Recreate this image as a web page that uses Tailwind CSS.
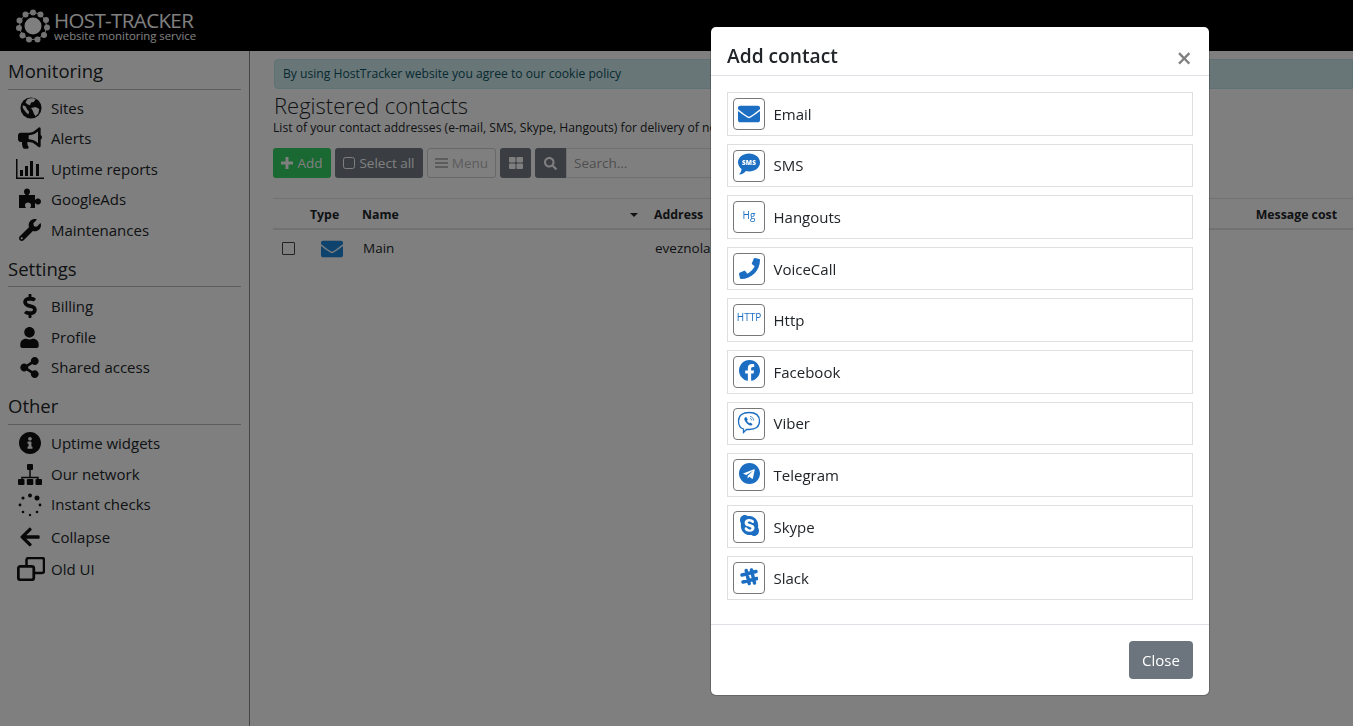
<!DOCTYPE html>
<html lang="en">
<head>
<meta charset="utf-8">
<title>Registered contacts</title>
<script src="https://cdn.jsdelivr.net/npm/@tailwindcss/browser@4"></script>
</head>
<body class="m-0 h-[726px] w-[1353px] overflow-hidden bg-white font-['Open_Sans',sans-serif] text-[#212529]">
<header class="flex h-[51px] items-center bg-black pl-4 text-white">
  <svg class="h-[34px] w-[34px]" viewBox="0 0 34 34" fill="#e8e8e8">
    <circle cx="17" cy="17" r="13.500" fill="none" stroke="#e8e8e8" stroke-width="1"/>
    <circle cx="17" cy="17" r="8.500" fill="#fff"/>
    <circle cx="17" cy="3.500" r="3"/><circle cx="24.500" cy="5.500" r="3"/><circle cx="30" cy="11" r="3"/><circle cx="31" cy="18.500" r="3"/><circle cx="28" cy="26" r="3"/><circle cx="21.500" cy="30.500" r="3"/><circle cx="13" cy="30.500" r="3"/><circle cx="6.500" cy="26.500" r="3"/><circle cx="3" cy="19" r="3"/><circle cx="3.500" cy="11.500" r="3"/><circle cx="9.500" cy="5.500" r="3"/>
  </svg>
  <div class="ml-1 flex flex-col">
    <span class="text-[20.5px] leading-[20px] tracking-[-0.62px]">HOST-TRACKER</span>
    <span class="text-[11.35px] leading-[11px]">website monitoring service</span>
  </div>
</header>
<div class="flex h-[675px]">
  <aside class="h-full w-[250px] shrink-0 border-r border-[#888] px-2 text-[15px]">
    <h2 class="flex h-[39px] items-center border-b border-[#bbb] pt-[2px] text-[18.5px] font-normal">Monitoring</h2>
    <ul class="mt-[2.6px] flex flex-col">
      <li class="flex h-[30.5px] items-center"><span class="flex w-[43px] justify-center pl-[2px]"><svg class="h-[22px] w-[22px]" viewBox="0 0 24 24"><circle cx="12" cy="12" r="11.500" fill="#111"/><path d="M8 2.500c3-1.500 7-1.500 9 0l-2 3-3 .5-1 3-3-1-2-2zM12 12l5-1 4 2-1 5-3 3-2-3-1-3zM3 9l3 1 2 4 2 2-1 3-3-3-3-4z" fill="#fff"/></svg></span>Sites</li>
      <li class="flex h-[30.5px] items-center"><span class="flex w-[43px] justify-center"><svg class="h-[24px] w-[24px]" viewBox="0 0 576 512" fill="#111"><path d="M576 240c0-23.63-12.95-44.04-32-55.12V32.01C544 23.26 537.02 0 512 0c-7.12 0-14.19 2.38-19.98 7.02l-85.03 68.03C364.28 109.19 310.66 128 256 128H64c-35.35 0-64 28.65-64 64v96c0 35.35 28.65 64 64 64h33.7c-1.39 10.48-2.18 21.14-2.18 32 0 39.77 9.26 77.35 25.56 110.94 5.19 10.69 16.52 17.06 28.4 17.06h74.28c26.05 0 41.69-29.84 25.9-50.56-16.4-21.52-26.15-48.36-26.15-77.44 0-11.11 1.62-21.79 4.41-32H256c54.66 0 108.28 18.81 150.98 52.95l85.03 68.03a32.023 32.023 0 0 0 19.98 7.02c24.92 0 32-22.78 32-32V295.13C563.05 284.04 576 263.63 576 240zm-96 141.42l-33.05-26.44C392.95 311.78 325.12 288 256 288v-96c69.12 0 136.95-23.78 190.95-66.98L480 98.58v282.84z"/></svg></span>Alerts</li>
      <li class="flex h-[30.5px] items-center"><span class="flex w-[43px] justify-center"><svg class="h-[20px] w-[28px]" viewBox="0 0 28 20" fill="#111"><path d="M0 0h1.500v18.500H28V20H0z"/><rect x="4" y="11" width="3" height="6"/><rect x="9" y="7" width="3" height="10"/><rect x="14" y="2" width="3" height="15"/><rect x="20" y="5" width="3" height="12"/></svg></span>Uptime reports</li>
      <li class="flex h-[30.5px] items-center"><span class="flex w-[43px] justify-center"><svg class="h-[22px] w-[24px]" viewBox="0 0 24 22" fill="#111"><path d="M1 7h6.500C7 6 6 5.500 6 3.500 6 1.500 7.500.5 9 .5s3 1 3 3C12 5.500 11 6 10.500 7H17v5c1-.8 1.500-1.500 3-1.500 2 0 3 1.500 3 3s-1 3-3 3c-1.500 0-2-.7-3-1.500v5h-5c.8-1 1-1.500 1-3 0-1.500-1.500-2.500-3-2.500s-3 1-3 2.500c0 1.500.5 2 1 3H1z"/></svg></span>GoogleAds</li>
      <li class="flex h-[30.5px] items-center"><span class="flex w-[43px] justify-center"><svg class="h-[22px] w-[22px]" viewBox="0 0 512 512" fill="#111"><path d="M507.73 109.1c-2.24-9.03-13.54-12.09-20.12-5.51l-74.36 74.36-67.88-11.31-11.31-67.88 74.36-74.36c6.62-6.62 3.43-17.9-5.66-20.16-47.38-11.74-99.55.91-136.58 37.93-39.64 39.64-50.55 97.1-34.05 147.2L18.74 402.76c-24.99 24.99-24.99 65.51 0 90.5 24.99 24.99 65.51 24.99 90.5 0l213.21-213.21c50.12 16.71 107.47 5.68 147.37-34.22 37.07-37.07 49.7-89.32 37.91-136.73zM64 472c-13.25 0-24-10.75-24-24 0-13.26 10.75-24 24-24s24 10.74 24 24c0 13.25-10.75 24-24 24z"/></svg></span>Maintenances</li>
    </ul>
    <h2 class="mt-[4.4px] flex h-[38px] items-center border-b border-[#bbb] pt-[2px] text-[18.5px] font-normal">Settings</h2>
    <ul class="mt-[3.4px] flex flex-col">
      <li class="flex h-[30.5px] items-center"><span class="flex w-[43px] justify-center"><svg class="h-[24px] w-[14px]" viewBox="0 0 288 512" fill="#111"><path d="M209.2 233.4l-108-31.6C88.7 198.2 80 186.5 80 173.5c0-16.3 13.2-29.5 29.5-29.5h66.3c12.2 0 24.2 3.7 34.2 10.5 6.1 4.1 14.3 3.1 19.5-2l34.8-34c7.1-6.9 6.1-18.4-1.8-24.5C238 74.8 207.4 64.1 176 64V16c0-8.8-7.2-16-16-16h-32c-8.8 0-16 7.2-16 16v48h-2.5C45.8 64-5.4 118.7.5 183.6c4.2 46.1 39.4 83.6 83.8 96.6l102.5 30c12.5 3.7 21.2 15.3 21.2 28.3 0 16.3-13.2 29.5-29.5 29.5h-66.3C100 368 88 364.3 78 357.5c-6.1-4.1-14.3-3.1-19.5 2l-34.8 34c-7.1 6.9-6.1 18.4 1.8 24.5 24.5 19.2 55.1 29.9 86.5 30v48c0 8.8 7.2 16 16 16h32c8.8 0 16-7.2 16-16v-48.2c46.6-.9 90.3-28.6 105.7-72.7 21.5-61.6-14.6-124.8-72.5-141.7z"/></svg></span>Billing</li>
      <li class="flex h-[30.5px] items-center pt-[1px]"><span class="flex w-[43px] justify-center"><svg class="h-[21px] w-[19px]" viewBox="0 0 448 512" fill="#111"><path d="M224 256c70.7 0 128-57.3 128-128S294.7 0 224 0 96 57.3 96 128s57.3 128 128 128zm89.6 32h-16.7c-22.2 10.2-46.9 16-72.9 16s-50.6-5.8-72.9-16h-16.7C60.2 288 0 348.2 0 422.4V464c0 26.5 21.5 48 48 48h352c26.5 0 48-21.5 48-48v-41.6c0-74.2-60.2-134.4-134.4-134.4z"/></svg></span>Profile</li>
      <li class="flex h-[30.5px] items-center"><span class="flex w-[43px] justify-center"><svg class="h-[21px] w-[19px]" viewBox="0 0 448 512" fill="#111"><path d="M352 320c-22.608 0-43.387 7.819-59.79 20.895l-102.486-64.054a96.551 96.551 0 0 0 0-41.683l102.486-64.054C308.613 184.181 329.392 192 352 192c53.019 0 96-42.981 96-96S405.019 0 352 0s-96 42.981-96 96c0 7.158.79 14.13 2.276 20.841L155.79 180.895C139.387 167.819 118.608 160 96 160c-53.019 0-96 42.981-96 96s42.981 96 96 96c22.608 0 43.387-7.819 59.79-20.895l102.486 64.054A96.301 96.301 0 0 0 256 416c0 53.019 42.981 96 96 96s96-42.981 96-96-42.981-96-96-96z"/></svg></span>Shared access</li>
    </ul>
    <h2 class="mt-[4.4px] flex h-[38px] items-center border-b border-[#bbb] pt-[2px] text-[18.5px] font-normal">Other</h2>
    <ul class="mt-[3px] flex flex-col">
      <li class="flex h-[30.5px] items-center"><span class="flex w-[43px] justify-center"><svg class="h-[22px] w-[22px]" viewBox="8 8 496 496" fill="#111"><path d="M256 8C119.043 8 8 119.083 8 256c0 136.997 111.043 248 248 248s248-111.003 248-248C504 119.083 392.957 8 256 8zm0 110c23.196 0 42 18.804 42 42s-18.804 42-42 42-42-18.804-42-42 18.804-42 42-42zm56 254c0 6.627-5.373 12-12 12h-88c-6.627 0-12-5.373-12-12v-24c0-6.627 5.373-12 12-12h12v-64h-12c-6.627 0-12-5.373-12-12v-24c0-6.627 5.373-12 12-12h64c6.627 0 12 5.373 12 12v100h12c6.627 0 12 5.373 12 12v24z"/></svg></span>Uptime widgets</li>
      <li class="flex h-[30.5px] items-center pt-[1px]"><span class="flex w-[43px] justify-center"><svg class="h-[21px] w-[24px]" viewBox="0 0 24 21"><path d="M12 6v7M4 17v-3.500h16V17" fill="none" stroke="#111" stroke-width="1.500"/><g fill="#111"><rect x="9" y="0" width="6" height="6" rx="1"/><rect x="0" y="15" width="6.500" height="6" rx="1"/><rect x="8.800" y="15" width="6.500" height="6" rx="1"/><rect x="17.500" y="15" width="6.500" height="6" rx="1"/></g></svg></span>Our network</li>
      <li class="flex h-[30.5px] items-center pt-[1px]"><span class="flex w-[43px] justify-center"><svg class="h-[24px] w-[24px]" viewBox="0 0 24 24" fill="#111"><circle cx="12" cy="2.500" r="2"/><circle cx="19" cy="5" r="2.500"/><circle cx="22" cy="12" r="1.400"/><circle cx="19" cy="19" r="1.300"/><circle cx="12" cy="22" r="1.200"/><circle cx="5" cy="19" r="1.300"/><circle cx="2" cy="12" r="1.400"/><circle cx="5" cy="5" r="1.600"/></svg></span>Instant checks</li>
      <li class="flex h-[33px] items-center pt-[3px]"><span class="flex w-[43px] justify-center"><svg class="h-[22px] w-[20px]" viewBox="0 0 448 512" fill="#111"><path d="M257.5 445.1l-22.2 22.2c-9.4 9.4-24.6 9.4-33.9 0L7 273c-9.4-9.4-9.4-24.6 0-33.9L201.4 44.7c9.4-9.4 24.6-9.4 33.9 0l22.2 22.2c9.5 9.5 9.3 25-.4 34.3L136.6 216H424c13.300 0 24 10.700 24 24v32c0 13.300-10.700 24-24 24H136.6l120.5 114.8c9.8 9.3 10 24.8.4 34.300z"/></svg></span>Collapse</li>
      <li class="flex h-[32px] items-center pt-[2px]"><span class="flex w-[43px] justify-center pl-[2px]"><svg class="h-[24px] w-[28px]" viewBox="0 0 28 24" fill="none" stroke="#111" stroke-width="2.500"><rect x="1.300" y="9.300" width="15.500" height="13.500" rx="2" stroke-width="2.800"/><path d="M9.500 9V3a2 2 0 0 1 2-2h13.500a2 2 0 0 1 2 2v11a2 2 0 0 1-2 2h-8"/></svg></span>Old UI</li>
    </ul>
  </aside>
  <main class="min-w-0 flex-1 pl-[23px]">
    <div class="ml-px mt-2 flex h-[30px] items-center rounded-l-[4px] border border-[#bee5eb] bg-[#d1ecf1] pl-2 text-[12.13px] text-[#0c5460]">By using HostTracker website you agree to our cookie policy</div>
    <h1 class="ml-px mt-[1px] text-[22px] font-light leading-[31px] text-[#212529]">Registered contacts</h1>
    <p class="text-[12.13px] leading-[14px]">List of your contact addresses (e-mail, SMS, Skype, Hangouts) for delivery of notifications</p>
    <div class="mt-[13px] flex gap-[4px] text-[13.5px]">
      <button class="flex h-[30px] w-[58px] items-center justify-center gap-1 rounded-[3px] bg-[#35d065] text-white"><svg class="h-[12px] w-[12px]" viewBox="0 0 12 12" fill="white"><path d="M4.500 0h3v4.500H12v3H7.500V12h-3V7.500H0v-3h4.500z"/></svg>Add</button>
      <button class="flex h-[30px] w-[88px] items-center justify-center gap-1 rounded-[3px] bg-[#747d86] text-white"><svg class="h-[12px] w-[12px]" viewBox="0 0 12 12" fill="none" stroke="white"><rect x=".5" y=".5" width="11" height="11" rx="2"/></svg>Select all</button>
      <button class="flex h-[30px] w-[69px] items-center justify-center gap-1 rounded-[3px] border border-[#d0d0d0] text-[#b8b8b8]"><svg class="h-[12px] w-[13px]" viewBox="0 0 13 12" fill="#b8b8b8"><rect y="1" width="13" height="2"/><rect y="5" width="13" height="2"/><rect y="9" width="13" height="2"/></svg>Menu</button>
      <button class="flex h-[30px] w-[31px] items-center justify-center rounded-[3px] bg-[#747d86]"><svg class="h-[12px] w-[14px]" viewBox="0 0 14 12" fill="white"><rect width="6.500" height="5.500" rx="1"/><rect x="7.500" width="6.500" height="5.500" rx="1"/><rect y="6.500" width="6.500" height="5.500" rx="1"/><rect x="7.500" y="6.500" width="6.500" height="5.500" rx="1"/></svg></button>
      <div class="flex h-[30px] w-[300px]">
        <span class="flex w-[31px] items-center justify-center rounded-l-[3px] bg-[#747d86]"><svg class="h-[13px] w-[13px]" viewBox="0 0 512 512" fill="white"><path d="M505 442.7L405.3 343c-4.5-4.5-10.6-7-17-7H372c27.6-35.3 44-79.7 44-128C416 93.1 322.9 0 208 0S0 93.1 0 208s93.1 208 208 208c48.3 0 92.7-16.4 128-44v16.3c0 6.4 2.5 12.5 7 17l99.7 99.7c9.4 9.4 24.6 9.4 33.9 0l28.3-28.3c9.4-9.4 9.4-24.6.1-34zM208 336c-70.7 0-128-57.2-128-128 0-70.7 57.2-128 128-128 70.7 0 128 57.2 128 128 0 70.7-57.2 128-128 128z"/></svg></span>
        <span class="flex flex-1 items-center border border-[#e0e0e0] pl-[7px] text-[#a0a0a0]">Search...</span>
      </div>
    </div>
    <div class="mt-5 flex h-[32px] items-center border-y border-[#dee2e6] border-b-2 pr-4 pt-[3px] text-[12.3px] font-bold">
      <span class="ml-[37px] w-[52px]">Type</span><span class="w-[286px]">Name</span>
      <svg class="mr-[16px] -ml-[18px] h-[4px] w-[8px]" viewBox="0 0 8 4" fill="#212529"><path d="M0 0h8L4 4z"/></svg>
      <span>Address</span><span class="ml-auto">Message cost</span>
    </div>
    <div class="flex h-[37px] items-center text-[13.5px]">
      <span class="ml-[9px] h-[13px] w-[13px] rounded-[1px] border border-[#444]"></span>
      <svg class="ml-[26px] h-[22px] w-[22px]" viewBox="0 0 512 512" fill="#1c86dc"><path d="M502.3 190.8c3.9-3.1 9.7-.2 9.7 4.7V400c0 26.5-21.5 48-48 48H48c-26.5 0-48-21.5-48-48V195.600c0-5 5.700-7.800 9.700-4.700 22.400 17.400 52.100 39.500 154.100 113.600 21.100 15.400 56.700 47.800 92.200 47.600 35.700.3 72-32.800 92.300-47.600 102-74.100 131.600-96.300 154-113.700zM256 320c23.200.4 56.600-29.200 73.400-41.400 132.700-96.300 142.800-104.700 173.400-128.700 5.800-4.500 9.200-11.500 9.200-18.900v-19c0-26.500-21.500-48-48-48H48C21.500 64 0 85.500 0 112v19c0 7.400 3.400 14.300 9.200 18.900 30.600 23.900 40.700 32.400 173.400 128.700 16.800 12.200 50.200 41.800 73.400 41.400z"/></svg>
      <span class="ml-5 w-[292px]">Main</span><span>eveznolan@example.com</span>
    </div>
  </main>
</div>
<div class="fixed inset-0 bg-black/50"></div>
<div class="fixed left-[711px] top-[27px] flex h-[668px] w-[498px] flex-col rounded-[5px] bg-white shadow-[0_0_0_1px_rgba(0,0,0,0.2)]">
  <div class="flex h-[49px] items-center justify-between border-b border-[#dee2e6] pl-4 pr-4 pt-[10px]">
    <h3 class="text-[19.2px] font-semibold">Add contact</h3>
    <span class="mr-[1px] mt-[3px] text-[27px] font-semibold leading-none text-[#808080]">×</span>
  </div>
  <ul class="flex flex-col gap-2 px-4 pt-4 text-[15px]">
    <li class="flex h-[43.6px] items-center gap-[8.5px] border border-[#dfdfdf] px-[5px] pt-[0.5px]"><span class="flex h-[32px] w-[32px] shrink-0 items-center justify-center rounded-[4px] border border-[#777]"><svg class="h-[22px] w-[22px]" viewBox="0 0 512 512" fill="#1b6ec2"><path d="M502.3 190.8c3.9-3.1 9.7-.2 9.7 4.7V400c0 26.5-21.5 48-48 48H48c-26.5 0-48-21.500-48-48V195.600c0-5 5.700-7.800 9.700-4.700 22.400 17.400 52.100 39.500 154.100 113.600 21.100 15.400 56.700 47.800 92.200 47.600 35.700.3 72-32.800 92.300-47.600 102-74.100 131.600-96.300 154-113.700zM256 320c23.200.4 56.600-29.200 73.400-41.400 132.700-96.300 142.800-104.700 173.400-128.700 5.800-4.500 9.200-11.500 9.200-18.900v-19c0-26.500-21.500-48-48-48H48C21.500 64 0 85.500 0 112v19c0 7.400 3.400 14.300 9.200 18.900 30.600 23.900 40.700 32.400 173.400 128.700 16.800 12.200 50.200 41.800 73.400 41.400z"/></svg></span>Email</li>
    <li class="flex h-[43.6px] items-center gap-[8.5px] border border-[#dfdfdf] px-[5px] pt-[0.5px]"><span class="flex h-[32px] w-[32px] shrink-0 items-center justify-center rounded-[4px] border border-[#777]"><svg class="mb-[3px] h-[24px] w-[24px]" viewBox="0 0 24 24"><path d="M12 1.500c6 0 11 3.800 11 9s-5 9-11 9c-1 0-2-.1-3-.4C7.500 21 5 22.500 2 22.500c1.500-1.500 2.500-3.500 2.500-5.500C2.500 15.400 1 13 1 10.500c0-5.200 5-9 11-9z" fill="#1b6ec2"/><text x="12" y="13" text-anchor="middle" font-size="6.500" font-weight="800" fill="#fff" font-family="'Open Sans',sans-serif">SMS</text></svg></span>SMS</li>
    <li class="flex h-[43.6px] items-center gap-[8.5px] border border-[#dfdfdf] px-[5px] pt-[0.5px]"><span class="flex h-[32px] w-[32px] shrink-0 justify-center rounded-[4px] border border-[#777] pt-[6px] text-[10px] leading-[14px] text-[#1b6ec2]">Hg</span>Hangouts</li>
    <li class="flex h-[43.6px] items-center gap-[8.5px] border border-[#dfdfdf] px-[5px] pt-[0.5px]"><span class="flex h-[32px] w-[32px] shrink-0 items-center justify-center rounded-[4px] border border-[#777]"><svg class="h-[21px] w-[21px]" viewBox="0 0 512 512" fill="#1b6ec2"><path d="M493.4 24.6l-104-24c-11.3-2.6-22.9 3.3-27.5 13.9l-48 112c-4.2 9.8-1.4 21.3 6.9 28l60.6 49.6c-36 76.7-98.9 140.5-177.2 177.2l-49.6-60.6c-6.8-8.3-18.2-11.1-28-6.9l-112 48C3.9 366.5-2 378.1.6 389.4l24 104C27.100 504.200 36.700 512 48 512c256.100 0 464-207.500 464-464 0-11.200-7.700-20.900-18.600-23.400z"/></svg></span>VoiceCall</li>
    <li class="flex h-[43.6px] items-center gap-[8.5px] border border-[#dfdfdf] px-[5px] pt-[0.5px]"><span class="flex h-[32px] w-[32px] shrink-0 justify-center rounded-[4px] border border-[#777] pt-[5px] text-[10px] leading-[14px] text-[#1b6ec2]">HTTP</span>Http</li>
    <li class="flex h-[43.6px] items-center gap-[8.5px] border border-[#dfdfdf] px-[5px] pt-[0.5px]"><span class="flex h-[32px] w-[32px] shrink-0 items-center justify-center rounded-[4px] border border-[#777]"><svg class="mb-[3px] h-[21px] w-[21px]" viewBox="8 8 496 496" fill="#1b6ec2"><path d="M504 256C504 119 393 8 256 8S8 119 8 256c0 123.780 90.690 226.380 209.250 245V327.690h-63V256h63v-54.640c0-62.150 37-96.480 93.670-96.480 27.140 0 55.520 4.840 55.520 4.840v61h-31.280c-30.800 0-40.410 19.120-40.410 38.730V256h68.780l-11 71.690h-57.780V501C413.310 482.380 504 379.780 504 256z"/></svg></span>Facebook</li>
    <li class="flex h-[43.6px] items-center gap-[8.5px] border border-[#dfdfdf] px-[5px] pt-[0.5px]"><span class="flex h-[32px] w-[32px] shrink-0 items-center justify-center rounded-[4px] border border-[#777]"><svg class="mb-[2px] h-[24px] w-[24px]" viewBox="0 0 24 24" fill="none" stroke="#1b6ec2"><path d="M12 1.500c6 0 10.500 2.500 10.500 8.500s-4 8.500-10.500 8.500h-2.500l-3 3v-3.500C3 17 1.500 14 1.500 10c0-6 4.500-8.500 10.500-8.500z" stroke-width="1.300"/><path d="M8 6.500c-1 .8-1 2 0 3.500 1 2 2.500 3.300 4.500 4.200 1.500.6 2.500 0 3-1l-2-1.700-1 .8c-1-.5-2-1.500-2.500-2.800l.8-1-1.500-2.500z" fill="#1b6ec2" stroke="none"/><path d="M13 5.500c2 .2 3.500 1.700 3.700 4M13 7.500c1 .1 1.700.9 1.800 2" stroke-width=".8"/></svg></span>Viber</li>
    <li class="flex h-[43.6px] items-center gap-[8.5px] border border-[#dfdfdf] px-[5px] pt-[0.5px]"><span class="flex h-[32px] w-[32px] shrink-0 items-center justify-center rounded-[4px] border border-[#777]"><svg class="mb-[3px] h-[21px] w-[21px]" viewBox="0 8 496 496" fill="#1b6ec2"><path d="M248 8C111 8 0 119 0 256s111 248 248 248 248-111 248-248S385 8 248 8zm121.800 169.900l-40.700 191.800c-3 13.600-11.100 16.900-22.400 10.500l-62-45.700-29.900 28.800c-3.300 3.300-6.100 6.100-12.500 6.100l4.400-63.100 114.900-103.800c5-4.400-1.100-6.900-7.700-2.500l-142 89.400-61.200-19.100c-13.300-4.200-13.600-13.300 2.800-19.700l239.100-92.200c11.100-4 20.800 2.700 17.200 19.500z"/></svg></span>Telegram</li>
    <li class="flex h-[43.6px] items-center gap-[8.5px] border border-[#dfdfdf] px-[5px] pt-[0.5px]"><span class="flex h-[32px] w-[32px] shrink-0 items-center justify-center rounded-[4px] border border-[#777]"><svg class="mb-[3px] h-[21px] w-[19px]" viewBox="0 32 448 448" preserveAspectRatio="none" fill="#1b6ec2"><path d="M424.700 299.800c2.900-14 4.700-28.900 4.700-43.800 0-113.500-91.900-205.300-205.300-205.300-14.900 0-29.700 1.700-43.800 4.700C161.300 40.700 137.700 32 112 32 50.200 32 0 82.200 0 144c0 25.700 8.700 49.300 23.300 68.200-2.900 14-4.700 28.900-4.700 43.800 0 113.500 91.900 205.300 205.300 205.300 14.900 0 29.700-1.700 43.800-4.700 19 14.600 42.600 23.300 68.200 23.300 61.800 0 112-50.200 112-112 .1-25.600-8.600-49.200-23.200-68.100zm-194.600 91.500c-65.600 0-120.500-29.200-120.500-65 0-16 9-30.600 29.500-30.600 31.200 0 34.100 44.900 88.100 44.900 25.700 0 42.300-11.400 42.300-26.300 0-18.700-16-21.600-42-28-62.500-15.400-117.800-22-117.800-87.200 0-59.200 58.600-81.100 109.100-81.100 55.100 0 110.800 21.900 110.800 55.400 0 16.900-11.400 31.800-30.300 31.800-28.300 0-29.200-33.500-75-33.500-25.700 0-42 7-42 22.500 0 19.800 20.800 21.800 69.100 33 41.400 9.300 90.700 26.800 90.700 77.600 0 59.100-57.100 86.500-112 86.500z"/></svg></span>Skype</li>
    <li class="flex h-[43.6px] items-center gap-[8.5px] border border-[#dfdfdf] px-[5px] pt-[0.5px]"><span class="flex h-[32px] w-[32px] shrink-0 items-center justify-center rounded-[4px] border border-[#777]"><svg class="mb-[2px] h-[18px] w-[18px]" viewBox="0 0 18 18" fill="none" stroke="#1b6ec2" stroke-width="3.400" stroke-linecap="round"><path d="M6.200 2.500l3 13M11.500 2l3 13M2 7l14-3.500M3 14l14-3.500"/></svg></span>Slack</li>
  </ul>
  <div class="mt-[24px] flex flex-1 items-start justify-end border-t border-[#dee2e6] pr-4 pt-4">
    <button class="h-[38px] w-[64px] rounded-[4px] bg-[#6c757d] text-[15px] text-white">Close</button>
  </div>
</div>
</body>
</html>
